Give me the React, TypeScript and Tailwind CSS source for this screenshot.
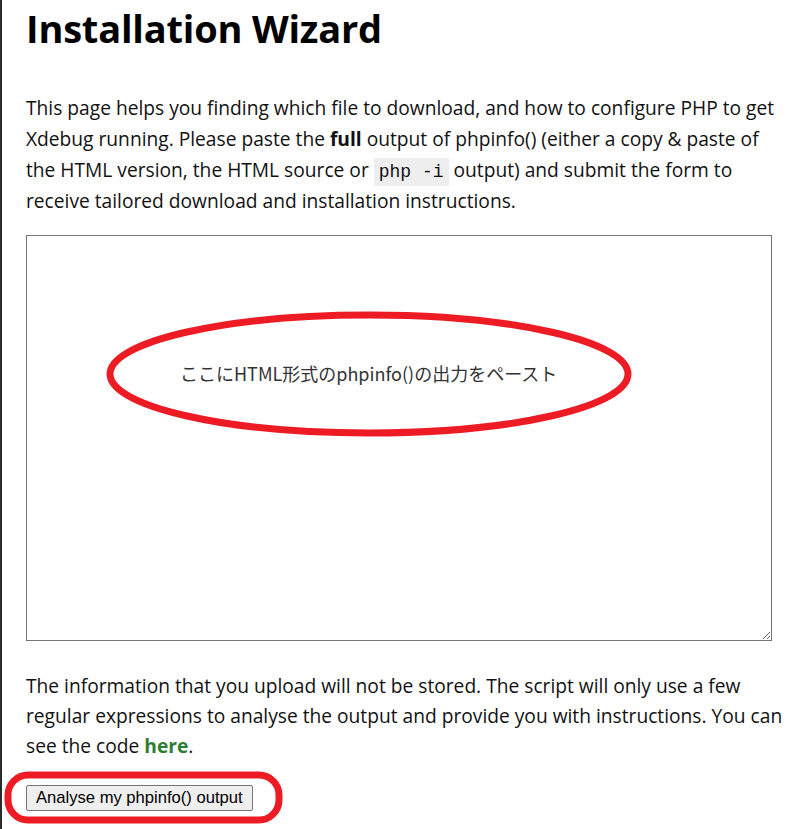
import React from "react";

const BODY_FONT = { fontFamily: '"Open Sans", "Noto Sans", sans-serif' };

export default function App() {
  return (
    <div
      className="min-h-[829px] border-l-2 border-[#2b2b2b] bg-white pl-[24px] text-black"
      style={BODY_FONT}
    >
      <div className="w-[762px]">
        <h1 className="pt-[3px] text-[38px] font-bold leading-[50px] tracking-[-0.2px]">
          Installation Wizard
        </h1>

        <p className="mt-[39px] text-[19.2px] leading-[31px] text-[#111]">
          This page helps you finding which file to download, and how to configure PHP to get
          Xdebug running. Please paste the <b>full</b> output of phpinfo() (either a copy &amp;
          paste of the HTML version, the HTML source or{" "}
          <code className="bg-[#eeeeee] px-[5px] py-[4px] font-['Liberation_Mono',monospace] text-[18px] leading-none">
            php -i
          </code>{" "}
          output) and submit the form to receive tailored download and installation instructions.
        </p>

        {/* textarea + red annotation */}
        <div className="relative mt-[19px] h-[406px] w-[746px]">
          <textarea
            className="block h-[406px] w-[746px] resize border border-[#767676] bg-white p-[2px] outline-none"
            aria-label="phpinfo output"
          />
          <span
            className="pointer-events-none absolute left-[154px] top-[125px] text-[18px] text-[#333]"
            style={{ fontFamily: '"Noto Sans CJK JP", "Noto Sans", sans-serif' }}
          >
            ここにHTML形式のphpinfo()の出力をペースト
          </span>
          <svg
            className="pointer-events-none absolute left-[78px] top-[73px]"
            width="530"
            height="132"
            viewBox="0 0 530 132"
          >
            <ellipse cx="265" cy="66" rx="259" ry="59" fill="none" stroke="#ed1c24" strokeWidth="7" />
          </svg>
        </div>

        <p className="mt-[30px] text-[19.2px] leading-[30px] text-[#111]">
          The information that you upload will not be stored. The script will only use a few
          regular expressions to analyse the output and provide you with instructions. You can see
          the code{" "}
          <a href="#" className="font-bold text-[#2e7d32]">
            here
          </a>
          .
        </p>

        {/* button + red annotation */}
        <div className="relative mt-[24px] inline-block">
          <button
            type="button"
            className="h-[26px] rounded-[2px] border border-[#767676] bg-[#efefef] px-[9px] text-[16.6px] leading-none text-black"
            style={{ fontFamily: '"Liberation Sans", Arial, sans-serif' }}
          >
            Analyse my phpinfo() output
          </button>
          <svg
            className="pointer-events-none absolute left-[-22px] top-[-14px]"
            width="280"
            height="54"
            viewBox="0 0 280 54"
          >
            <rect x="4" y="4" width="271" height="45" rx="20" fill="none" stroke="#ed1c24" strokeWidth="7" />
          </svg>
        </div>
      </div>
    </div>
  );
}
